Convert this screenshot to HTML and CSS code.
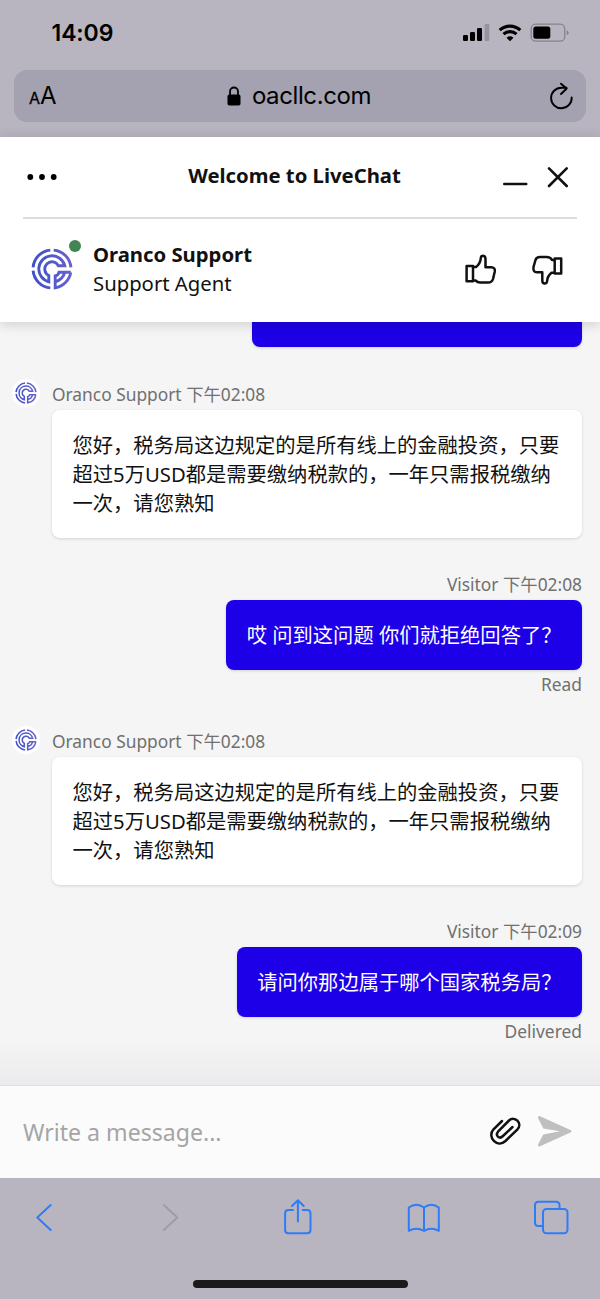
FILE: index.html
```
<!DOCTYPE html>
<html lang="zh-CN">
<head>
<meta charset="utf-8">
<title>LiveChat</title>
<link rel="stylesheet" href="styles.css">
</head>
<body>
<svg class="defs" width="0" height="0">
  <defs>
    <linearGradient id="brand" gradientUnits="userSpaceOnUse" x1="0" y1="0" x2="42" y2="0">
      <stop offset="0" stop-color="#3c50c8"/><stop offset="1" stop-color="#6a62cf"/>
    </linearGradient>
    <symbol id="logo" viewBox="0 0 42 42">
      <g fill="none" stroke="url(#brand)" stroke-width="2.900">
        <path d="M19.300 2.100A19 19 0 0 0 2.100 19.300M22.700 2.100A19 19 0 0 1 39.900 19.300M2.100 22.700A19 19 0 0 0 19.300 39.900"/>
        <path d="M33.800 17.800A13.200 13.200 0 1 0 17.800 33.800V27.500A7.200 7.200 0 1 1 27.400 17.800Z"/>
        <path d="M39.800 24.200H28Q27.400 27.200 24.200 28V39.800A19 19 0 0 0 39.800 24.200M24.200 33.800A13.200 13.200 0 0 0 33.800 24.200"/>
      </g>
    </symbol>
  </defs>
</svg>
<div class="phone">
  <div class="browser-top">
    <div class="status">
      <span class="clock">14:09</span>
      <svg class="status-icons" width="108" height="20" viewBox="461 23 108 20">
        <rect x="463" y="35" width="5" height="6" rx="1.2"/><rect x="470" y="32" width="5" height="9" rx="1.2"/><rect x="477" y="28" width="5" height="13" rx="1.2"/><rect x="484.700" y="24" width="4.600" height="17" rx="1.2" fill="#96939f"/>
        <g fill="none" stroke="#000" stroke-width="3.100"><path d="M499.700 30.200A15 15 0 0 1 520.300 30.200"/><path d="M503.500 34.200A9.500 9.500 0 0 1 516.500 34.200"/></g>
        <path d="M506.500 37.700Q510 35 513.500 37.700L510 41.200Z"/>
        <rect x="531.200" y="24.200" width="33.500" height="17" rx="4.500" fill="none" stroke="#85828e" stroke-width="1.300"/>
        <rect x="533.300" y="26.500" width="17" height="12.300" rx="2.500"/>
        <path d="M566.700 30.200Q568.700 31 568.700 32.700T566.700 35.200Z" fill="#85828e"/>
      </svg>
    </div>
    <div class="address">
      <span class="reader"><small>A</small>A</span>
      <span class="url">
        <svg width="14" height="20" viewBox="0 0 14 20"><rect x="0.500" y="8.500" width="13" height="11" rx="1.800"/><path d="M3 9V5.500a4 4 0 0 1 8 0V9" fill="none" stroke="#000" stroke-width="1.800"/></svg>
        <span>oacllc.com</span>
      </span>
      <svg class="reload" width="24" height="28" viewBox="550 82 24 28" fill="none" stroke="#000" stroke-width="1.900" stroke-linecap="round" stroke-linejoin="round"><path d="M571.700 97.500A10.300 10.300 0 1 1 561.400 87.700H566.500M561 83.700L566.700 88.500L561 94"/></svg>
    </div>
  </div>

  <header class="chat-header">
    <div class="title-row">
      <svg width="32" height="8" viewBox="26 173 32 8"><circle cx="30.300" cy="177" r="2.900"/><circle cx="42" cy="177" r="2.900"/><circle cx="53.700" cy="177" r="2.900"/></svg>
      <h1>Welcome to LiveChat</h1>
      <svg width="68" height="24" viewBox="502 165 68 24" fill="none" stroke="#111" stroke-width="2.600" stroke-linecap="round"><path d="M504.300 184H526.200M549 168.300L566.700 186M566.700 168.300L549 186"/></svg>
    </div>
    <div class="agent-row">
      <div class="agent-logo"><svg width="42" height="42"><use href="#logo"/></svg><i class="online"></i></div>
      <div class="agent"><strong>Oranco Support</strong><span>Support Agent</span></div>
      <svg class="rating" width="100" height="32" viewBox="464 253.500 100 32" fill="none" stroke="#111" stroke-width="2.500" stroke-linejoin="round">
        <path d="M466.600 266.500H473V281.800H466.600ZM473 267.500H476Q480.500 264 480.800 258.500Q481 256.200 483 256.200Q485.500 256.400 485.500 259.500V267.700H491.500Q495.400 268.300 494.800 272L493 279.500Q492 283 488 283H480Q477.500 283 475.500 281H473"/>
        <path d="M554.700 259H561.200V274H554.700ZM554.700 260.500H552Q550.500 257.600 546.500 257.600H540Q536.500 257.600 535.500 260.500L533.500 267.500Q532.600 272.500 537 272.800H542.300V281Q542.300 284 544.700 284Q547 284 547.200 281Q547.500 276.500 551.500 273.200H554.700"/>
      </svg>
    </div>
  </header>

  <main class="messages">
    <div class="bubble visitor clipped"></div>
    <div class="meta"><span class="avatar"><svg width="22" height="22"><use href="#logo"/></svg></span><span>Oranco Support 下午02:08</span></div>
    <div class="bubble operator">您好，税务局这边规定的是所有线上的金融投资，只要<br>超过5万USD都是需要缴纳税款的，一年只需报税缴纳<br>一次，请您熟知</div>
    <div class="meta right">Visitor 下午02:08</div>
    <div class="bubble visitor">哎 问到这问题 你们就拒绝回答了？</div>
    <div class="receipt">Read</div>
    <div class="meta after-receipt"><span class="avatar"><svg width="22" height="22"><use href="#logo"/></svg></span><span>Oranco Support 下午02:08</span></div>
    <div class="bubble operator">您好，税务局这边规定的是所有线上的金融投资，只要<br>超过5万USD都是需要缴纳税款的，一年只需报税缴纳<br>一次，请您熟知</div>
    <div class="meta right">Visitor 下午02:09</div>
    <div class="bubble visitor">请问你那边属于哪个国家税务局？</div>
    <div class="receipt">Delivered</div>
  </main>

  <div class="composer">
    <span class="placeholder">Write a message...</span>
    <svg width="84" height="34" viewBox="488 1116 84 34">
      <path d="M502 1122L493.300 1130.500C487 1138 497 1149.500 505.500 1142L517.500 1130.300C523 1124 514.500 1116.500 509 1121.500L498.500 1132C494.500 1137 499.500 1140.500 503 1137L512.500 1128" fill="none" stroke="#111" stroke-width="2.500" stroke-linecap="round"/>
      <path d="M539.500 1117L571 1131.200Q572 1132.300 571 1133.300L539.500 1147.500Q537.500 1147.700 538 1145.500L543.300 1135.500L560 1132.300L543.300 1129.500L538 1119Q537.500 1117 539.500 1117Z" fill="#bfbfbf"/>
    </svg>
  </div>

  <nav class="browser-bottom">
    <div class="toolbar">
      <svg width="36" height="38" viewBox="26 1199 36 38"><path d="M50.700 1205L37.300 1217.500L50.700 1230"/></svg>
      <svg class="disabled" width="36" height="38" viewBox="152.700 1199 36 38"><path d="M163.500 1205L177 1217.500L163.500 1230"/></svg>
      <svg width="36" height="38" viewBox="279.500 1199 36 38"><path d="M292.500 1210H288Q284.600 1210 284.600 1213.400V1230Q284.600 1233.300 288 1233.300H306.600Q310 1233.300 310 1230V1213.400Q310 1210 306.600 1210H302.200M297.400 1221.500V1200.500M291.500 1206L297.400 1200.200L303.200 1206"/></svg>
      <svg width="36" height="38" viewBox="406.200 1199 36 38"><path d="M424.200 1207.500Q416.500 1202 409 1207.500V1230.800Q416.500 1226.500 424.200 1230.800Q431.500 1226.500 439 1230.800V1207.500Q431.500 1202 424.200 1207.500V1230.800"/></svg>
      <svg width="36" height="38" viewBox="533 1199 36 38"><rect x="543" y="1209" width="24.500" height="24.300" rx="3.500"/><path d="M543 1226H538.500Q535 1226 535 1222.500V1205.300Q535 1201.800 538.500 1201.800H556Q559.500 1201.800 559.500 1205.300V1209"/></svg>
    </div>
    <div class="home"></div>
  </nav>
</div>
</body>
</html>
```
FILE: styles.css
```
* { box-sizing: border-box; }
body { margin: 0; font-family: "Noto Sans", "Noto Sans CJK SC", sans-serif; color: #111; }
svg { display: block; flex: none; }
.defs { position: absolute; }
.phone { width: 600px; height: 1299px; display: flex; flex-direction: column; overflow: hidden; background: #f5f5f5; }

.browser-top { height: 137px; flex: none; background: #b8b5c0; color: #000; font-family: Inter, sans-serif; padding: 0 14px; }
.status { height: 70px; display: flex; justify-content: space-between; align-items: flex-start; padding: 23px 17px 0 37.5px; }
.clock { font-size: 23px; line-height: 20px; font-weight: 600; letter-spacing: -0.1px; }
.address { height: 52px; border-radius: 13px; background: #a4a2b0; display: flex; justify-content: space-between; align-items: center; padding: 0 12px 0 15px; }
.reader { font-size: 24px; line-height: 30px; width: 40px; padding-top: 2px; }
.reader small { font-size: 16px; -webkit-text-stroke: 0.3px #000; }
.url { display: flex; align-items: center; gap: 11px; font-size: 24px; line-height: 30px; letter-spacing: -0.4px; margin-right: 21px; }

.chat-header { height: 185px; flex: none; background: #fff; padding: 0 23px; position: relative; z-index: 1; box-shadow: 0 2px 12px rgba(0,0,0,.17); }
.title-row { height: 82px; border-bottom: 2px solid #dcdcdc; display: flex; align-items: center; justify-content: space-between; padding: 0 7px 0 3px; }
.title-row h1 { margin: 0 0 5px 29px; font-size: 20.3px; line-height: 28px; font-weight: 700; }
.agent-row { height: 103px; display: flex; align-items: center; padding: 0 13px 3px 8px; }
.agent-logo { position: relative; }
.online { position: absolute; left: 38px; top: -8px; width: 12px; height: 12px; border-radius: 50%; background: #448453; }
.agent { margin-left: 20px; flex: 1; display: flex; flex-direction: column; font-size: 20.3px; line-height: 29px; }

.messages { flex: 1; min-height: 0; display: flex; flex-direction: column; padding: 0 18px 0 52px; background: linear-gradient(#f5f5f5 715px, #ebebed 763px); }
.bubble { align-self: flex-start; flex: none; padding: 21px 20.5px 19.6px; border-radius: 8px; font-size: 20.3px; line-height: 29px; white-space: nowrap; box-shadow: 0 1px 3px rgba(0,0,0,.14); }
.operator { width: 530px; background: #fff; }
.visitor { align-self: flex-end; background: #1d00e7; color: #fff; }
.clipped { width: 330px; height: 25px; padding: 0; border-radius: 0 0 8px 8px; margin-bottom: 0.4px; }
.meta { height: 32px; flex: none; margin-top: 30.6px; display: flex; align-items: center; padding-bottom: 1px; font-size: 17.35px; color: #707070; }
.meta.right { justify-content: flex-end; padding-bottom: 1.6px; }
.meta.after-receipt { margin-top: 26.2px; }
.avatar { width: 28px; height: 28px; margin: 0 12px 0 -40px; border-radius: 50%; background: #fff; display: flex; align-items: center; justify-content: center; }
.receipt { height: 29px; flex: none; text-align: right; font-size: 17.4px; line-height: 29px; color: #707070; }

.composer { height: 93px; flex: none; border-top: 1px solid #dededf; background: #fbfbfb; display: flex; align-items: center; justify-content: space-between; padding: 0 28px 0 23px; }
.placeholder { font-size: 23.1px; color: #a5a5a5; }

.browser-bottom { height: 121px; flex: none; background: #b8b5c0; display: flex; flex-direction: column; align-items: center; }
.toolbar { width: 100%; height: 80px; display: flex; align-items: center; justify-content: space-between; padding: 0 31px 0 26px; fill: none; stroke: #2f7cf6; stroke-width: 2; stroke-linecap: round; stroke-linejoin: round; }
.disabled { stroke: #9f9ca7; }
.home { width: 215px; height: 8px; border-radius: 4px; background: #1a1a1a; margin-top: 22px; }
```
